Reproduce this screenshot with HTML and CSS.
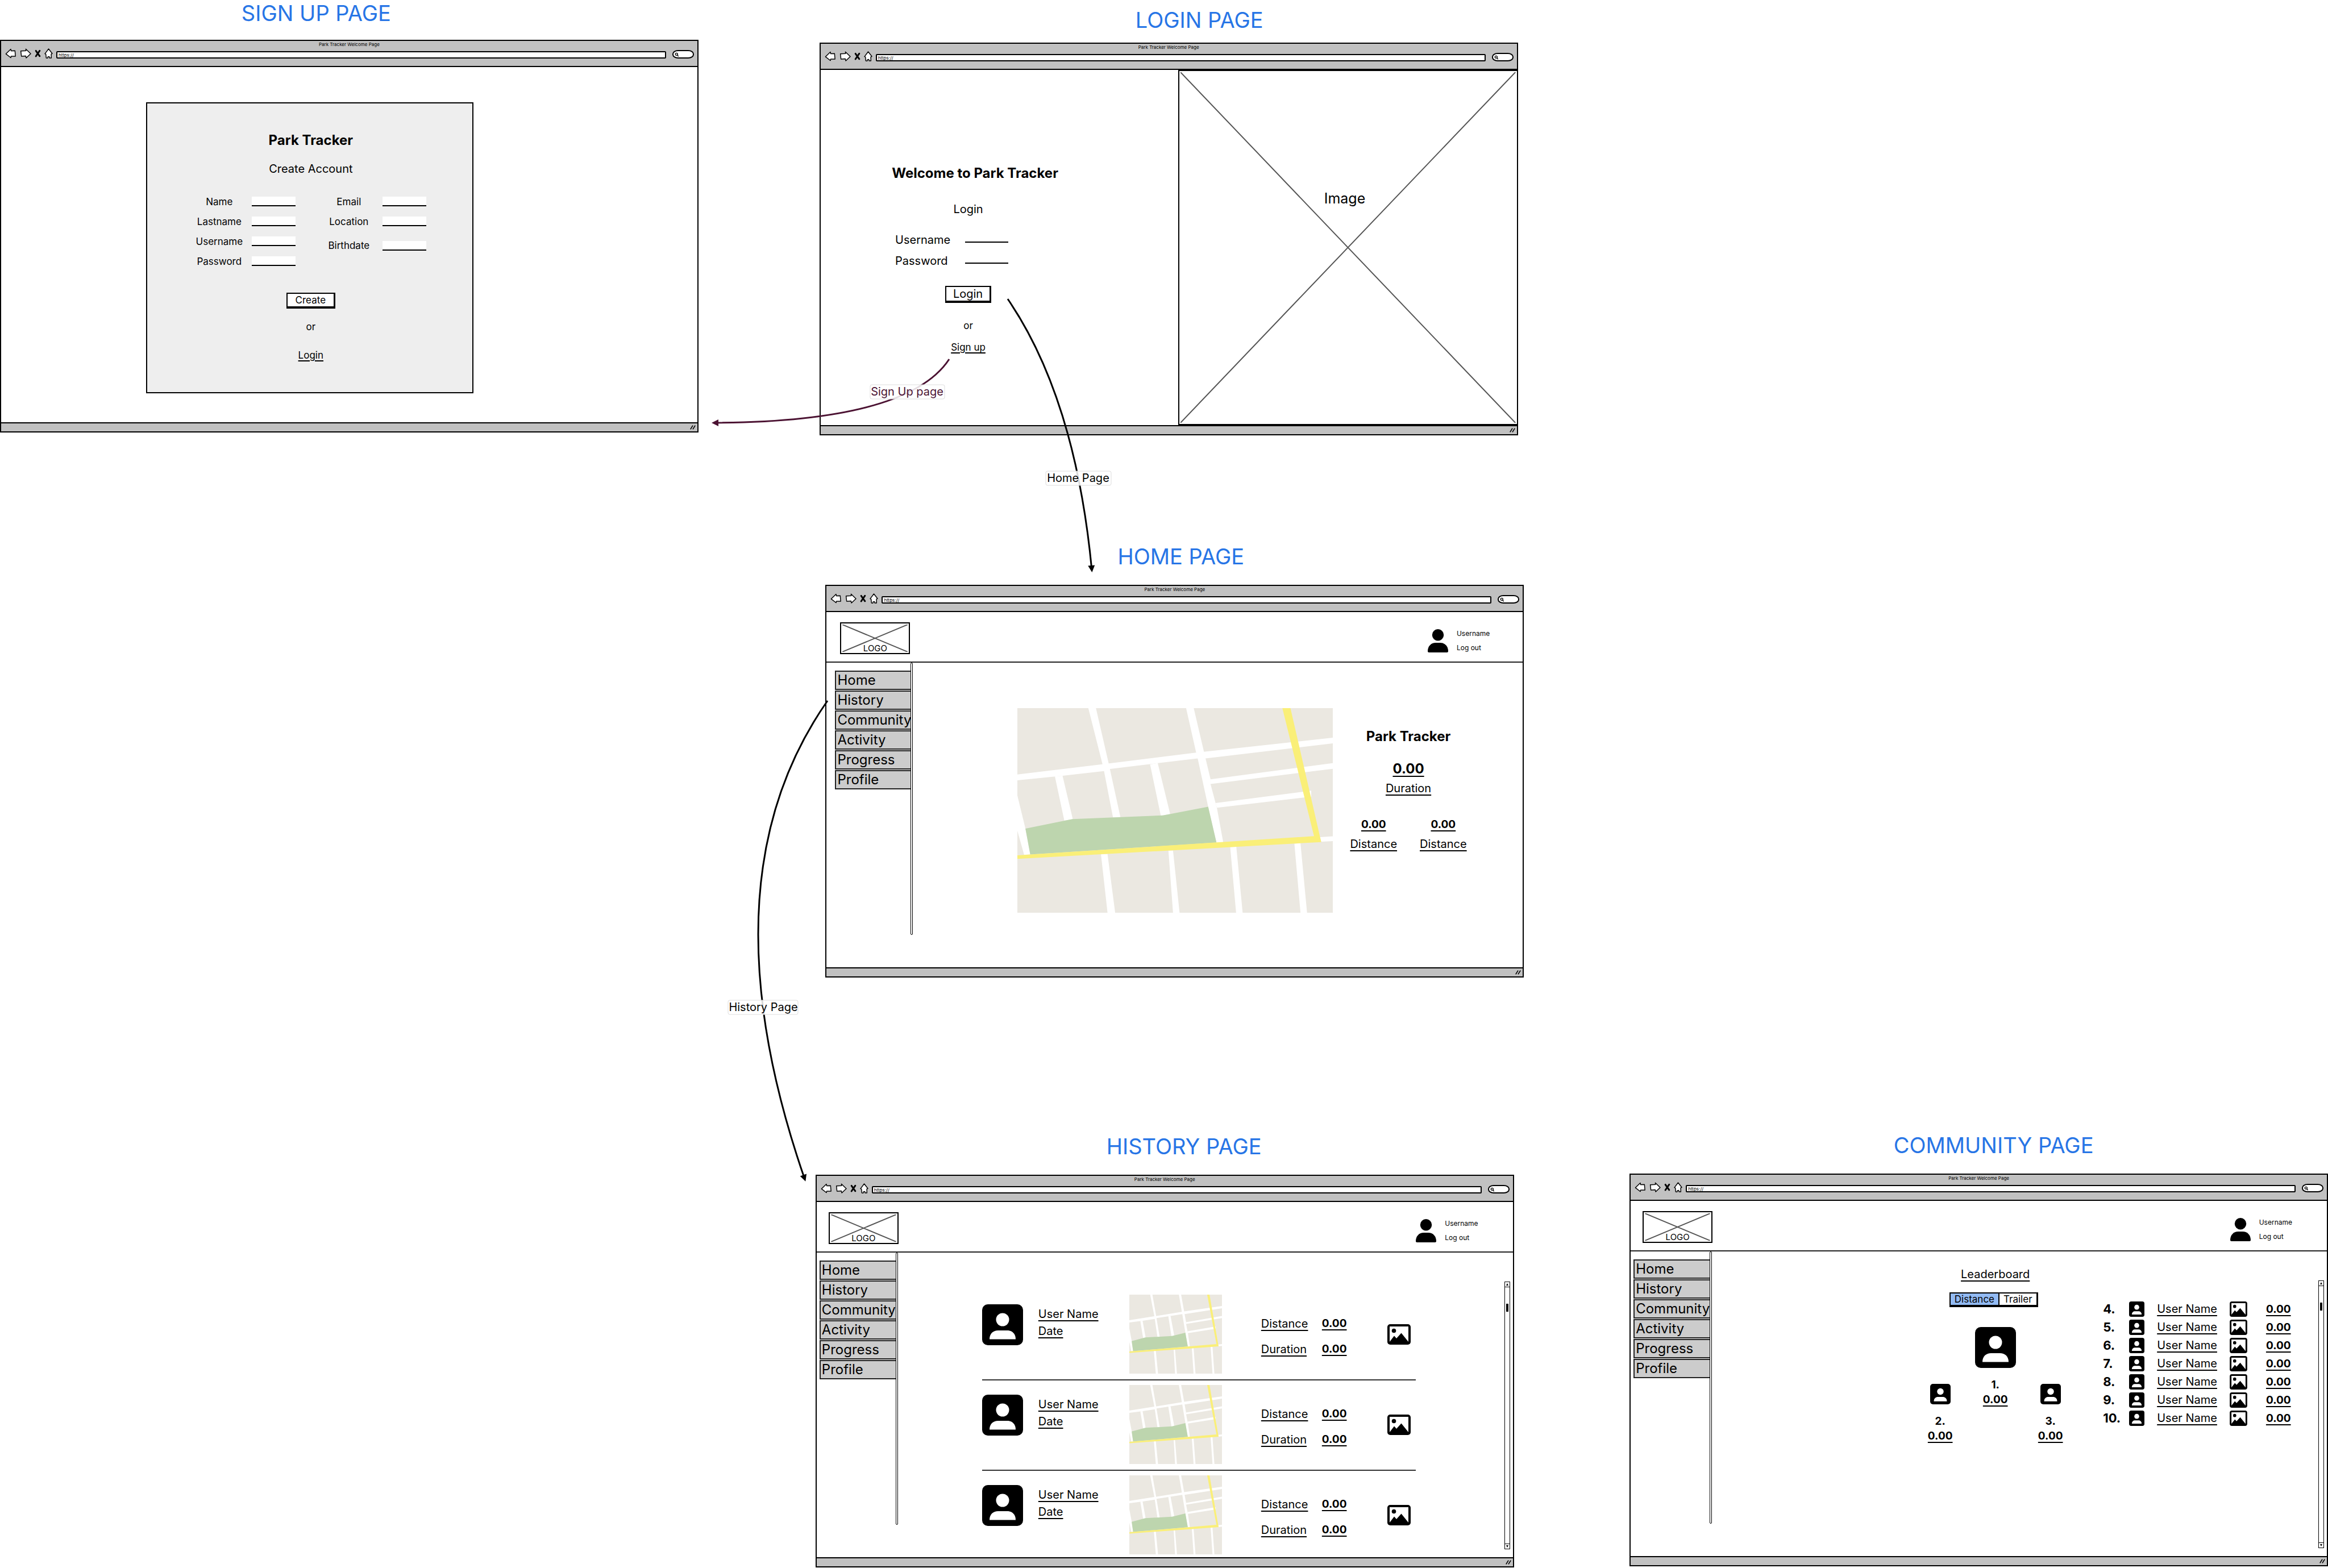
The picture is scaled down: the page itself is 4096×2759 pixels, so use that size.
FILE: index.html
```html
<!DOCTYPE html>
<html lang="en">
<head>
<meta charset="utf-8">
<title>Park Tracker wireframes</title>
<link rel="stylesheet" href="styles.css">
</head>
<body>
<svg class="sprite" aria-hidden="true">
  <symbol id="back" viewBox="0 0 92 86"><path class="ink" d="M5 47 46 7l3 15 32-2 4 47H49l-3 12z"/></symbol>
  <symbol id="forward" viewBox="0 0 92 86"><path class="ink" d="M6 23l43-3-1-14 41 39-38 36-4-17-36 3z"/></symbol>
  <symbol id="stop" viewBox="0 0 50 86"><path class="cross" d="M9 21 41 66M41 20 9 67"/></symbol>
  <symbol id="house" viewBox="0 0 70 86"><path class="ink" d="M35 5l31 39-9 5 1 32H43l-3-12-11 2-2 11-12-1-3-32-8-3z"/></symbol>
  <symbol id="lens" viewBox="0 0 12 12"><circle cx="5" cy="5" r="3" fill="none" stroke="#000" stroke-width="2"/><path d="M7 7l3 4" stroke="#000" stroke-width="2"/></symbol>
  <symbol id="grip" viewBox="0 0 12 12"><path d="M1 10 6 2M6 10l5-8" stroke="#000" stroke-width="2"/></symbol>
  <symbol id="person" viewBox="0 0 36 41"><circle cx="18" cy="10.200" r="10.200"/><path d="M0 39C0 30 6 24 14 24h8c8 0 14 6 14 15 0 1-1 2-2 2H2c-1 0-2-1-2-2z"/></symbol>
  <symbol id="avatar" viewBox="0 0 72 72"><rect width="72" height="72" rx="10"/><circle cx="36" cy="27" r="11.500" fill="#fff"/><path d="M13 61.500C13 51 20 46 28 46h16c8 0 15 5 15 15.500z" fill="#fff"/></symbol>
  <symbol id="picture" viewBox="0 0 41 36"><rect width="41" height="36" rx="5"/><path d="M4 4h33v27L24.500 15.500 16 25l-4-4.500L4 31z" fill="#fff"/><circle cx="11.500" cy="11.500" r="3.800"/></symbol>
  <symbol id="map" viewBox="0 0 1445 1376" preserveAspectRatio="none">
    <rect width="1445" height="1376" fill="#ebe8e1"/>
    <g fill="#fff">
      <path d="M0 446 390 377 819 299 855 293 1445 199V237L862 338 826 338 643 370 425 409 397 423 207 455 0 485z"/>
      <path d="M325 0H360L418 370 472 733 438 735 397 423 390 377z"/>
      <path d="M773 0H808L855 295 885 479 885 511 908 638 914 670 943 902 912 904 874 663 826 338 819 299z"/>
      <path d="M172 460 207 455 254 747 215 756zM608 378 643 370 700 713 657 723z"/>
      <path d="M0 588 37 810 59 984 31 986 0 825z"/>
      <path d="M885 479 1445 370V408L885 510zM908 638 1346 555V595L914 670zM1387 868 1445 862V894L1392 898z"/>
      <path d="M383 983 413 981 448 1376H413zM692 958 713 957 743 1376H713zM975 935 1003 933 1032 1376H1002zM1269 912 1297 909 1327 1376H1297z"/>
    </g>
    <path d="M37 810 252 746 667 721 874 663 912 904 59 984z" fill="#bdd5ae"/>
    <path d="M0 990 1359 861 1214 0H1251L1392 901 0 1014z" fill="#faef78"/>
  </symbol>
</svg>

<main class="board">

  <section class="artboard signup" id="signup">
    <h2 class="caption">SIGN UP PAGE</h2>
    <div class="browser">
      <header class="chrome">
        <p class="tab">Park Tracker Welcome Page</p>
        <div class="toolbar">
          <button class="tool wide" aria-label="Back"><svg><use href="#back"/></svg></button>
          <button class="tool wide" aria-label="Forward"><svg><use href="#forward"/></svg></button>
          <button class="tool slim" aria-label="Stop"><svg><use href="#stop"/></svg></button>
          <button class="tool" aria-label="Home"><svg><use href="#house"/></svg></button>
          <input class="url" type="text" value="https://" aria-label="Address">
          <label class="search"><svg><use href="#lens"/></svg><input type="text" aria-label="Search"></label>
        </div>
      </header>
      <div class="view">
        <form class="card">
          <h1 class="brand">Park Tracker</h1>
          <p class="lead">Create Account</p>
          <div class="fields">
            <div class="column">
              <div class="field"><label for="su-name">Name</label><input id="su-name" type="text"></div>
              <div class="field"><label for="su-last">Lastname</label><input id="su-last" type="text"></div>
              <div class="field"><label for="su-user">Username</label><input id="su-user" type="text"></div>
              <div class="field"><label for="su-pass">Password</label><input id="su-pass" type="password"></div>
            </div>
            <div class="column right">
              <div class="field"><label for="su-mail">Email</label><input id="su-mail" type="text"></div>
              <div class="field"><label for="su-loc">Location</label><input id="su-loc" type="text"></div>
              <div class="field tall"><label for="su-birth">Birthdate</label><input id="su-birth" type="text"></div>
            </div>
          </div>
          <button class="btn" type="button">Create</button>
          <p class="or">or</p>
          <a class="link" href="#login">Login</a>
        </form>
      </div>
      <footer class="status"><svg><use href="#grip"/></svg></footer>
    </div>
  </section>

  <section class="artboard login" id="login">
    <h2 class="caption">LOGIN PAGE</h2>
    <div class="browser">
      <header class="chrome">
        <p class="tab">Park Tracker Welcome Page</p>
        <div class="toolbar">
          <button class="tool wide" aria-label="Back"><svg><use href="#back"/></svg></button>
          <button class="tool wide" aria-label="Forward"><svg><use href="#forward"/></svg></button>
          <button class="tool slim" aria-label="Stop"><svg><use href="#stop"/></svg></button>
          <button class="tool" aria-label="Home"><svg><use href="#house"/></svg></button>
          <input class="url" type="text" value="https://" aria-label="Address">
          <label class="search"><svg><use href="#lens"/></svg><input type="text" aria-label="Search"></label>
        </div>
      </header>
      <div class="view split">
        <form class="signin">
          <h1 class="brand">Welcome to Park Tracker</h1>
          <p class="lead">Login</p>
          <div class="credentials">
            <label for="li-user">Username</label><input id="li-user" type="text">
            <label for="li-pass">Password</label><input id="li-pass" type="password">
          </div>
          <button class="btn large" type="button">Login</button>
          <p class="or">or</p>
          <a class="link" href="#signup">Sign up</a>
        </form>
        <div class="hero">
          <svg class="crossing" viewBox="0 0 100 100" preserveAspectRatio="none"><path d="M0 0 100 100M100 0 0 100"/></svg>
          <span>Image</span>
        </div>
      </div>
      <footer class="status"><svg><use href="#grip"/></svg></footer>
    </div>
  </section>

  <section class="artboard home" id="home">
    <h2 class="caption">HOME PAGE</h2>
    <div class="browser">
      <header class="chrome">
        <p class="tab">Park Tracker Welcome Page</p>
        <div class="toolbar">
          <button class="tool wide" aria-label="Back"><svg><use href="#back"/></svg></button>
          <button class="tool wide" aria-label="Forward"><svg><use href="#forward"/></svg></button>
          <button class="tool slim" aria-label="Stop"><svg><use href="#stop"/></svg></button>
          <button class="tool" aria-label="Home"><svg><use href="#house"/></svg></button>
          <input class="url" type="text" value="https://" aria-label="Address">
          <label class="search"><svg><use href="#lens"/></svg><input type="text" aria-label="Search"></label>
        </div>
      </header>
      <div class="view app">
        <div class="topbar">
          <div class="logo"><svg class="crossing" viewBox="0 0 100 100" preserveAspectRatio="none"><path d="M0 0 100 100M100 0 0 100"/></svg><span>LOGO</span></div>
          <div class="account"><svg><use href="#person"/></svg><div><p>Username</p><a href="#login">Log out</a></div></div>
        </div>
        <div class="layout">
          <nav class="menu">
            <a href="#home">Home</a><a href="#history">History</a><a href="#community">Community</a><a href="#activity">Activity</a><a href="#progress">Progress</a><a href="#profile">Profile</a>
          </nav>
          <div class="divider"></div>
          <div class="dashboard">
            <svg class="map"><use href="#map"/></svg>
            <div class="totals">
              <h1 class="brand">Park Tracker</h1>
              <b class="figure big">0.00</b>
              <span class="term">Duration</span>
              <div class="pair">
                <div><b class="figure">0.00</b><span class="term">Distance</span></div>
                <div><b class="figure">0.00</b><span class="term">Distance</span></div>
              </div>
            </div>
          </div>
        </div>
      </div>
      <footer class="status"><svg><use href="#grip"/></svg></footer>
    </div>
  </section>

  <section class="artboard history" id="history">
    <h2 class="caption">HISTORY PAGE</h2>
    <div class="browser">
      <header class="chrome">
        <p class="tab">Park Tracker Welcome Page</p>
        <div class="toolbar">
          <button class="tool wide" aria-label="Back"><svg><use href="#back"/></svg></button>
          <button class="tool wide" aria-label="Forward"><svg><use href="#forward"/></svg></button>
          <button class="tool slim" aria-label="Stop"><svg><use href="#stop"/></svg></button>
          <button class="tool" aria-label="Home"><svg><use href="#house"/></svg></button>
          <input class="url" type="text" value="https://" aria-label="Address">
          <label class="search"><svg><use href="#lens"/></svg><input type="text" aria-label="Search"></label>
        </div>
      </header>
      <div class="view app">
        <div class="topbar">
          <div class="logo"><svg class="crossing" viewBox="0 0 100 100" preserveAspectRatio="none"><path d="M0 0 100 100M100 0 0 100"/></svg><span>LOGO</span></div>
          <div class="account"><svg><use href="#person"/></svg><div><p>Username</p><a href="#login">Log out</a></div></div>
        </div>
        <div class="layout">
          <nav class="menu">
            <a href="#home">Home</a><a href="#history">History</a><a href="#community">Community</a><a href="#activity">Activity</a><a href="#progress">Progress</a><a href="#profile">Profile</a>
          </nav>
          <div class="divider"></div>
          <ul class="feed">
            <li>
              <svg class="avatar"><use href="#avatar"/></svg>
              <div class="who"><span class="term">User Name</span><span class="term">Date</span></div>
              <svg class="map"><use href="#map"/></svg>
              <div class="numbers"><span class="term">Distance</span><b class="figure">0.00</b><span class="term">Duration</span><b class="figure">0.00</b></div>
              <svg class="picture"><use href="#picture"/></svg>
            </li>
            <li>
              <svg class="avatar"><use href="#avatar"/></svg>
              <div class="who"><span class="term">User Name</span><span class="term">Date</span></div>
              <svg class="map"><use href="#map"/></svg>
              <div class="numbers"><span class="term">Distance</span><b class="figure">0.00</b><span class="term">Duration</span><b class="figure">0.00</b></div>
              <svg class="picture"><use href="#picture"/></svg>
            </li>
            <li>
              <svg class="avatar"><use href="#avatar"/></svg>
              <div class="who"><span class="term">User Name</span><span class="term">Date</span></div>
              <svg class="map"><use href="#map"/></svg>
              <div class="numbers"><span class="term">Distance</span><b class="figure">0.00</b><span class="term">Duration</span><b class="figure">0.00</b></div>
              <svg class="picture"><use href="#picture"/></svg>
            </li>
          </ul>
          <div class="scrollbar"><i class="cap up"></i><i class="track"><i class="thumb"></i></i><i class="cap down"></i></div>
        </div>
      </div>
      <footer class="status"><svg><use href="#grip"/></svg></footer>
    </div>
  </section>

  <section class="artboard community" id="community">
    <h2 class="caption">COMMUNITY PAGE</h2>
    <div class="browser">
      <header class="chrome">
        <p class="tab">Park Tracker Welcome Page</p>
        <div class="toolbar">
          <button class="tool wide" aria-label="Back"><svg><use href="#back"/></svg></button>
          <button class="tool wide" aria-label="Forward"><svg><use href="#forward"/></svg></button>
          <button class="tool slim" aria-label="Stop"><svg><use href="#stop"/></svg></button>
          <button class="tool" aria-label="Home"><svg><use href="#house"/></svg></button>
          <input class="url" type="text" value="https://" aria-label="Address">
          <label class="search"><svg><use href="#lens"/></svg><input type="text" aria-label="Search"></label>
        </div>
      </header>
      <div class="view app">
        <div class="topbar">
          <div class="logo"><svg class="crossing" viewBox="0 0 100 100" preserveAspectRatio="none"><path d="M0 0 100 100M100 0 0 100"/></svg><span>LOGO</span></div>
          <div class="account"><svg><use href="#person"/></svg><div><p>Username</p><a href="#login">Log out</a></div></div>
        </div>
        <div class="layout">
          <nav class="menu">
            <a href="#home">Home</a><a href="#history">History</a><a href="#community">Community</a><a href="#activity">Activity</a><a href="#progress">Progress</a><a href="#profile">Profile</a>
          </nav>
          <div class="divider"></div>
          <div class="leaders">
            <div class="top3">
              <span class="term">Leaderboard</span>
              <div class="segmented"><button class="on" type="button">Distance</button><button type="button">Trailer</button></div>
              <div class="podium">
                <div class="side"><svg class="avatar medium"><use href="#avatar"/></svg><b class="place">2.</b><b class="figure">0.00</b></div>
                <div><svg class="avatar"><use href="#avatar"/></svg><b class="place">1.</b><b class="figure">0.00</b></div>
                <div class="side"><svg class="avatar medium"><use href="#avatar"/></svg><b class="place">3.</b><b class="figure">0.00</b></div>
              </div>
            </div>
            <table class="ranks">
              <tr><th>4.</th><td><svg class="avatar small"><use href="#avatar"/></svg></td><td class="name"><span class="term">User Name</span></td><td class="shot"><svg class="picture small"><use href="#picture"/></svg></td><td><b class="figure">0.00</b></td></tr>
              <tr><th>5.</th><td><svg class="avatar small"><use href="#avatar"/></svg></td><td class="name"><span class="term">User Name</span></td><td class="shot"><svg class="picture small"><use href="#picture"/></svg></td><td><b class="figure">0.00</b></td></tr>
              <tr><th>6.</th><td><svg class="avatar small"><use href="#avatar"/></svg></td><td class="name"><span class="term">User Name</span></td><td class="shot"><svg class="picture small"><use href="#picture"/></svg></td><td><b class="figure">0.00</b></td></tr>
              <tr><th>7.</th><td><svg class="avatar small"><use href="#avatar"/></svg></td><td class="name"><span class="term">User Name</span></td><td class="shot"><svg class="picture small"><use href="#picture"/></svg></td><td><b class="figure">0.00</b></td></tr>
              <tr><th>8.</th><td><svg class="avatar small"><use href="#avatar"/></svg></td><td class="name"><span class="term">User Name</span></td><td class="shot"><svg class="picture small"><use href="#picture"/></svg></td><td><b class="figure">0.00</b></td></tr>
              <tr><th>9.</th><td><svg class="avatar small"><use href="#avatar"/></svg></td><td class="name"><span class="term">User Name</span></td><td class="shot"><svg class="picture small"><use href="#picture"/></svg></td><td><b class="figure">0.00</b></td></tr>
              <tr><th>10.</th><td><svg class="avatar small"><use href="#avatar"/></svg></td><td class="name"><span class="term">User Name</span></td><td class="shot"><svg class="picture small"><use href="#picture"/></svg></td><td><b class="figure">0.00</b></td></tr>
            </table>
          </div>
          <div class="scrollbar"><i class="cap up"></i><i class="track"><i class="thumb"></i></i><i class="cap down"></i></div>
        </div>
      </div>
      <footer class="status"><svg><use href="#grip"/></svg></footer>
    </div>
  </section>

  <svg class="flows" viewBox="0 0 4096 2759">
    <defs>
      <marker id="tip" markerUnits="userSpaceOnUse" markerWidth="16" markerHeight="16" refX="9" refY="7" orient="auto"><path d="M1 1 13 7 1 13z"/></marker>
      <marker id="tip-plum" markerUnits="userSpaceOnUse" markerWidth="16" markerHeight="16" refX="9" refY="7" orient="auto"><path class="plum-fill" d="M1 1 13 7 1 13z"/></marker>
    </defs>
    <path class="flow plum" marker-end="url(#tip-plum)" d="M1670 632Q1598 742 1256 744"/>
    <path class="flow" marker-end="url(#tip)" d="M1773 526Q1892 700 1921 1003"/>
    <path class="flow" marker-end="url(#tip)" d="M1456 1233Q1234 1550 1416 2075"/>
    <rect class="tag" x="1531" y="677" width="131" height="25" rx="3"/>
    <rect class="tag" x="1840" y="829" width="115" height="25" rx="3"/>
    <rect class="tag" x="1281" y="1760" width="123" height="25" rx="3"/>
    <text class="plum-fill" x="1596" y="696">Sign Up page</text>
    <text x="1897" y="848">Home Page</text>
    <text x="1343" y="1779">History Page</text>
  </svg>
</main>
</body>
</html>
```
FILE: styles.css
```css
* { box-sizing: border-box; }
body { margin: 0; background: #fff; color: #000; font: 20px/24px Inter, "Liberation Sans", sans-serif; }
h1, h2, p, ul { margin: 0; padding: 0; }
button, input { font: inherit; color: inherit; margin: 0; padding: 0; border: 0; border-radius: 0; background: none; outline: 0; }
a { color: inherit; text-decoration: none; }
svg { display: block; }
.sprite { position: absolute; width: 0; height: 0; overflow: hidden; }
.ink { fill: #fff; stroke: #000; stroke-width: 7; stroke-linejoin: round; }
.cross { fill: none; stroke: #000; stroke-width: 14; stroke-linecap: round; }

/* canvas */
.board { position: relative; min-height: 2759px; overflow: hidden; }
.artboard { position: absolute; width: 30%; display: flex; flex-direction: column; gap: 31px; }
.signup { left: 0; top: 4px; gap: 28px; }
.login { left: 35.200%; top: 16px; gap: 21px; }
.home { left: 35.460%; top: 960px; }
.history { left: 35.030%; top: 1998px; }
.community { left: 70%; top: 1996px; }
.caption { font-size: 38px; line-height: 38px; font-weight: 400; color: #2775e6; text-align: center; }
.signup .caption { padding-right: 116px; }
.login .caption { padding-left: 108px; }
.home .caption { padding-left: 22px; }
.history .caption { padding-left: 68px; }
.community .caption { padding-left: 52px; }
.flows { position: absolute; left: 0; top: 0; width: 100%; pointer-events: none; font-size: 20px; text-anchor: middle; }
.flow { fill: none; stroke: #000; stroke-width: 3; }
.flow.plum { stroke: #4b1232; }
.plum-fill { fill: #4b1232; }
.tag { fill: #fff; fill-opacity: .85; stroke: #ddd; }

/* browser window */
.browser { display: flex; flex-direction: column; min-height: 691px; border: 2px solid #000; }
.chrome { height: 46px; background: #c1c1c1; border-bottom: 2px solid #000; }
.tab { font-size: 8px; line-height: 12px; text-align: center; }
.toolbar { display: flex; align-items: flex-end; gap: 6px; height: 19px; padding: 0 6px 0 7px; }
.tool { width: 15px; height: 18px; }
.tool.wide { width: 20px; }
.tool.slim { width: 11px; }
.tool svg { width: 100%; height: 100%; }
.url { flex: 1; min-width: 0; height: 13px; margin: 0 5px 0 0; padding: 0 2px; border: 2px solid #000; border-radius: 2px; background: #fff; font-size: 8px; line-height: 9px; }
.search { display: flex; align-items: center; width: 38px; height: 15px; padding: 0 2px; border: 2px solid #000; border-radius: 10px/7px; background: #fff; }
.search svg { width: 8px; height: 8px; flex: none; }
.search input { width: 20px; height: 9px; }
.view { flex: 1; display: flex; }
.status { display: flex; justify-content: flex-end; align-items: center; height: 16px; padding-right: 3px; background: #c1c1c1; border-top: 2px solid #000; }
.status svg { width: 10px; height: 10px; }

/* forms */
.brand { font-size: 24px; line-height: 30px; font-weight: 700; }
.or, .link, .btn { font-size: 17px; line-height: 22px; }
.link { text-decoration: underline; text-decoration-thickness: 2px; text-underline-offset: 3px; }
.btn { height: 28px; padding: 0 14px; border: 2px solid #000; border-right-width: 3px; border-bottom-width: 4px; background: #fff; }
.btn.large { height: 30px; padding: 0 12px; font-size: 20px; }
.card { display: flex; flex-direction: column; align-items: center; align-self: flex-start; width: 47%; margin: 62px 0 0 255px; padding: 50px 0 54px 4px; border: 2px solid #000; background: #eee; }
.card .lead { margin-top: 23px; }
.fields { display: flex; gap: 56px; margin: 28px 0 38px; font-size: 17px; }
.field { display: grid; grid-template-columns: 84px 77px; column-gap: 15px; align-items: center; height: 35px; text-align: center; }
.right .field { grid-template-columns: 76px 77px; column-gap: 21px; }
.field.tall { height: 50px; }
.field input { width: 100%; height: 17px; background: #fff; border-bottom: 2px solid #000; }
.card .or { margin: 21px 0 28px; }
.signin { flex: 1; display: flex; flex-direction: column; align-items: center; padding: 167px 110px 0 0; }
.signin .brand { padding-left: 24px; }
.signin .lead { margin: 36px 0 23px; }
.credentials { display: grid; grid-template-columns: 96px 76px; column-gap: 27px; grid-auto-rows: 37px; align-items: center; margin: 0 58px 26px 0; }
.credentials input { width: 100%; height: 10px; border-bottom: 2px solid #000; }
.signin .or { margin: 29px 0 16px; }
.hero { position: relative; width: 48.600%; padding: 210px 12px 0 0; border: 2px solid #000; border-right: 0; text-align: center; font-size: 25px; line-height: 28px; }
.hero span, .logo span { position: relative; }
.crossing { position: absolute; left: 2px; top: 2px; width: calc(100% - 4px); height: calc(100% - 4px); }
.crossing path { stroke: #555; stroke-width: 2; vector-effect: non-scaling-stroke; }

/* application frame */
.app { flex-direction: column; }
.topbar { display: flex; justify-content: space-between; align-items: flex-start; height: 89px; padding: 18px 61px 0 21px; border-bottom: 2px solid #222; }
.home .topbar { padding-right: 58px; padding-left: 24px; }
.logo { position: relative; width: 123px; height: 56px; padding-top: 34px; border: 2px solid #000; text-align: center; font-size: 15px; line-height: 20px; }
.account { display: flex; gap: 15px; padding-top: 12px; font-size: 12px; line-height: 16px; }
.account svg { width: 36px; height: 41px; }
.account a { display: block; margin-top: 9px; }
.layout { flex: 1; display: flex; align-items: flex-start; }
.menu { display: flex; flex-direction: column; gap: 1px; width: 139px; padding: 14px 0 0 5px; }
.home .menu { width: 148px; padding-left: 15px; }
.menu a { height: 34px; padding-left: 2px; border: 2px solid #222; border-right: 0; background: #ccc; font-size: 24px; line-height: 30px; }
.divider { width: 4px; height: 479px; border: 1px solid #000; border-radius: 2px; background: #fff; }
.term, .figure { text-decoration: underline; text-decoration-thickness: 2px; text-underline-offset: 4px; }
.figure { font-size: 19px; font-weight: 700; }
.figure.big { font-size: 24px; line-height: 28px; }

/* home */
.dashboard { flex: 1; display: flex; align-items: flex-start; padding-left: 184px; }
.dashboard .map { width: 555px; height: 360px; margin-top: 80px; }
.totals { display: flex; flex-direction: column; align-items: center; margin: 115px 0 0 30px; }
.totals .big { margin: 28px 0 8px; }
.pair { display: flex; gap: 40px; margin-top: 40px; }
.pair div { display: flex; flex-direction: column; align-items: center; gap: 10px; }

/* history */
.feed { margin: 66px auto 0 148px; list-style: none; }
.feed li { display: flex; align-items: flex-start; width: 763px; padding: 8px 0 10px; border-bottom: 2px solid #333; }
.feed li:last-child { border: 0; padding-bottom: 0; }
.avatar { width: 72px; height: 72px; }
.feed .avatar { margin-top: 17px; }
.who { display: flex; flex-direction: column; gap: 6px; width: 160px; margin-left: 27px; padding-top: 22px; }
.feed .map { width: 163px; height: 139px; }
.numbers { display: grid; grid-template-columns: 82px 43px; gap: 21px 25px; margin: 39px 72px 0 69px; }
.picture { width: 41px; height: 36px; }
.feed .picture { align-self: center; }
.scrollbar { display: flex; flex-direction: column; width: 10px; height: 471px; margin: 51px 5px 0 0; }
.cap { flex: none; height: 10px; border: 1px solid #000; }
.cap::before { content: ""; display: block; margin: 2px auto; width: 0; border: 2px solid transparent; }
.up::before { border-bottom: 4px solid #000; border-top: 0; }
.down::before { border-top: 4px solid #000; border-bottom: 0; }
.track { flex: 1; border: 1px solid #000; border-width: 0 1px; }
.thumb { display: block; width: 4px; height: 14px; margin: 29px auto 0; background: #000; }

/* community */
.leaders { flex: 1; display: flex; align-items: flex-start; padding-left: 353px; }
.top3 { display: flex; flex-direction: column; align-items: center; width: 291px; margin-top: 28px; }
.segmented { display: flex; margin: 20px 6px 35px 0; border: 2px solid #000; border-right-width: 3px; border-bottom-width: 4px; background: #fff; font-size: 17px; line-height: 20px; }
.segmented button { padding: 0 7px; }
.segmented .on { border-right: 2px solid #000; background: #92baf3; }
.podium { display: flex; }
.podium div { display: flex; flex-direction: column; align-items: center; gap: 2px; width: 97px; }
.podium .side { padding-top: 100px; }
.place { margin-top: 16px; font-size: 19px; }
.medium { width: 36px; height: 36px; }
.small { width: 27px; height: 27px; }
.picture.small { width: 31px; }
.ranks { margin: 85px 0 0 44px; border-collapse: collapse; }
.ranks tr { height: 32px; }
.ranks td, .ranks th { padding: 0; text-align: left; }
.ranks th { width: 46px; font-size: 22px; font-weight: 700; }
.ranks .name { padding: 0 22px; }
.ranks .shot { padding-right: 33px; }
```
